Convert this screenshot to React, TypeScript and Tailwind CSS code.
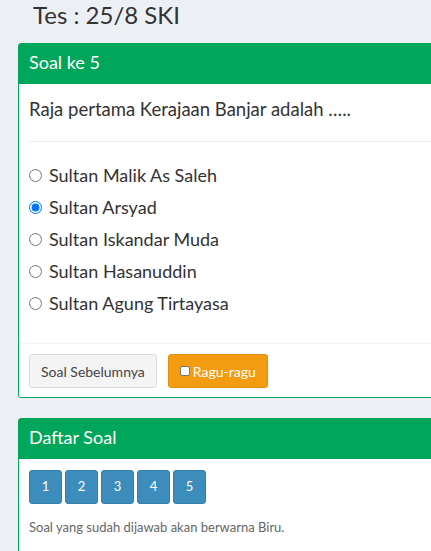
import React from "react";

const options = [
  "Sultan Malik As Saleh",
  "Sultan Arsyad",
  "Sultan Iskandar Muda",
  "Sultan Hasanuddin",
  "Sultan Agung Tirtayasa",
];

export default function App() {
  return (
    <div
      className="w-[431px] h-[551px] overflow-hidden bg-[#ecf0f5] text-[#333]"
      style={{ fontFamily: "Lato, 'Open Sans', sans-serif" }}
    >
      <h1 className="pl-[33px] pt-0 h-[43px] text-[24px] leading-[30px] text-[#333]">Tes : 25/8 SKI</h1>

      <div className="ml-[18px] w-[700px] border border-[#00a65a] rounded-[3px] bg-white">
        <div className="bg-[#00a65a] h-[40px] px-[10px] pb-[3px] flex items-center text-white text-[18px]">Soal ke 5</div>
        <div className="px-[10px] pt-[12px]">
          <p className="text-[18.5px] leading-[26px] text-[#333]">Raja pertama Kerajaan Banjar adalah …..</p>
          <div className="mt-[19px] border-t border-[#eee]" />
          <div className="pt-[17px] pb-[24px] flex flex-col">
            {options.map((o, i) => (
              <label key={o} className="flex items-center h-[32px] text-[18px] text-[#333]">
                <input
                  type="radio"
                  name="q"
                  defaultChecked={i === 1}
                  className="w-[13px] h-[13px] m-0 mr-[7px] accent-[#0075ff]"
                />
                {o}
              </label>
            ))}
          </div>
        </div>
        <div className="border-t border-[#f4f4f4] px-[10px] pt-[10px] pb-[9px] flex gap-[11px]">
          <button className="h-[34px] px-[11px] bg-[#f4f4f4] border border-[#ddd] rounded-[3px] text-[14px] text-[#444]">
            Soal Sebelumnya
          </button>
          <button className="h-[34px] px-[11px] bg-[#f39c12] border border-[#e08e0b] rounded-[3px] text-[14px] text-white flex items-center gap-[3px]">
            <span className="inline-block w-[10px] h-[10px] bg-white border border-[#767676] rounded-[2px]" />
            Ragu-ragu
          </button>
        </div>
      </div>

      <div className="mt-[20px] ml-[18px] w-[700px] border border-[#00a65a] rounded-[3px] bg-white">
        <div className="bg-[#00a65a] h-[40px] px-[10px] pb-[3px] flex items-center text-white text-[18px]">Daftar Soal</div>
        <div className="px-[10px] pt-[11px] pb-[20px]">
          <div className="flex gap-[3px]">
            {[1, 2, 3, 4, 5].map((n) => (
              <button
                key={n}
                className="w-[33px] h-[34px] bg-[#3c8dbc] border border-[#367fa9] rounded-[3px] text-white text-[13px]"
              >
                {n}
              </button>
            ))}
          </div>
          <p className="mt-[14px] text-[13px] text-[#666]">Soal yang sudah dijawab akan berwarna Biru.</p>
        </div>
      </div>
    </div>
  );
}
